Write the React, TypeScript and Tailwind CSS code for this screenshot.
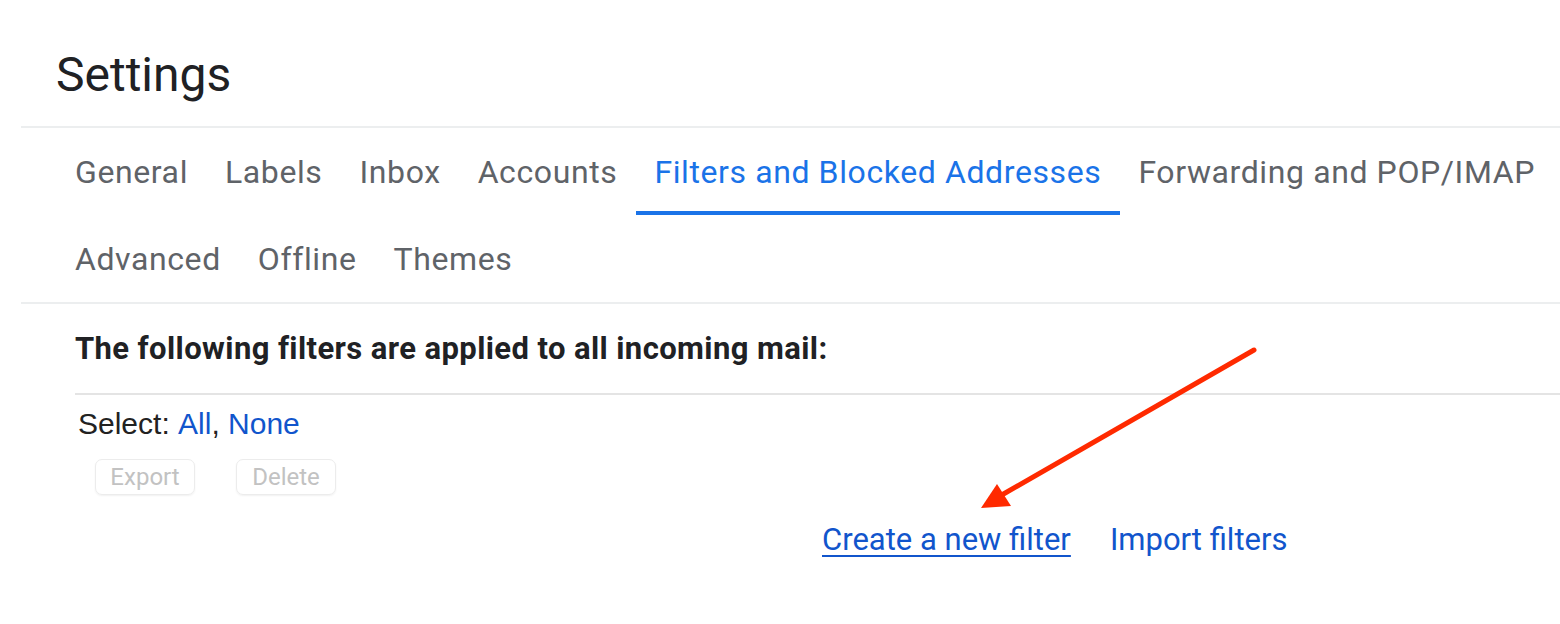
import React from "react";

const tabs1 = ["General", "Labels", "Inbox", "Accounts", "Filters and Blocked Addresses", "Forwarding and POP/IMAP"];
const tabs2 = ["Advanced", "Offline", "Themes"];

function Tab({ label, active }: { label: string; active?: boolean }) {
  return (
    <div className="relative flex h-full shrink-0 items-center whitespace-nowrap pl-[18px] pr-[19px]">
      <span className={active ? "text-[#1a73e8]" : "text-[#5f6368]"}>{label}</span>
      {active && <div className="absolute bottom-0 left-0 right-0 h-[4px] bg-[#1a73e8]" />}
    </div>
  );
}

export default function App() {
  return (
    <div className="relative h-[624px] w-[1560px] overflow-hidden bg-white" style={{ fontFamily: "Roboto, 'Liberation Sans', sans-serif" }}>
      <div className="flex h-[126px] items-center pl-[56px] pt-[24px] text-[48px] text-[#202124]">Settings</div>
      <div className="ml-[21px] border-t-2 border-[#eceeef]">
        <div className="flex h-[87px] flex-nowrap pl-[36px] pt-[1px] text-[32px] tracking-[0.6px]">
          {tabs1.map((t) => (
            <Tab key={t} label={t} active={t === "Filters and Blocked Addresses"} />
          ))}
        </div>
        <div className="flex h-[87px] flex-nowrap pl-[36px] pt-[1px] text-[32px] tracking-[0.6px]">
          {tabs2.map((t) => (
            <Tab key={t} label={t} />
          ))}
        </div>
        <div className="border-t-2 border-[#eceeef]" />
      </div>
      <div className="pl-[75px]">
        <div className="flex h-[89px] items-center pt-[2px] text-[31px] font-bold tracking-[0.4px] text-[#202124]">
          The following filters are applied to all incoming mail:
        </div>
        <div className="border-t-2 border-[#e4e4e4]" />
        <div className="flex h-[61px] items-center pl-[3px] pb-[4px] text-[30px] text-[#222]" style={{ fontFamily: "'Liberation Sans', Arial, sans-serif" }}>
          Select:&nbsp;<span className="text-[#1155cc]">All</span>,&nbsp;<span className="text-[#1155cc]">None</span>
        </div>
        <div className="mt-[3px] flex gap-[41px] pl-[20px]">
          <div className="flex h-[36px] w-[100px] items-center justify-center rounded-[7px] border border-[#ececec] text-[24px] text-[#c2c2c2] shadow-[0_1px_2px_rgba(0,0,0,0.06)]">Export</div>
          <div className="flex h-[36px] w-[100px] items-center justify-center rounded-[7px] border border-[#ececec] text-[24px] text-[#c2c2c2] shadow-[0_1px_2px_rgba(0,0,0,0.06)]">Delete</div>
        </div>
        <div className="flex h-[64px] items-center gap-[39px] pl-[747px] pt-[26px] text-[31px] text-[#1155cc]">
          <span className="underline decoration-[2px] underline-offset-[5px]">Create a new filter</span>
          <span>Import filters</span>
        </div>
      </div>
      <svg className="absolute left-0 top-0" width="1560" height="624" viewBox="0 0 1560 624">
        <line x1="1254" y1="350" x2="1000" y2="496" stroke="#ff2a00" strokeWidth="5" strokeLinecap="round" />
        <polygon points="981,508 997,484 1011,506" fill="#ff2a00" />
      </svg>
    </div>
  );
}
